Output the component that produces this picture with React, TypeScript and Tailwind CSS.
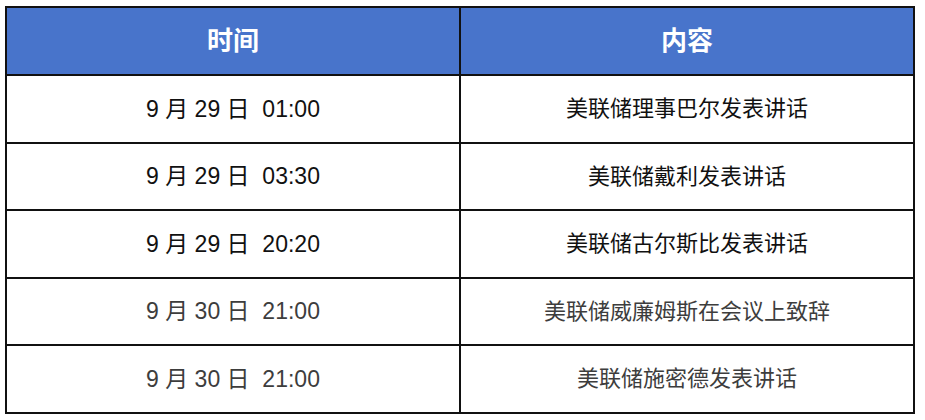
const rows = [
  { time: '9 月 29 日  01:00', content: '美联储理事巴尔发表讲话', dim: false },
  { time: '9 月 29 日  03:30', content: '美联储戴利发表讲话', dim: false },
  { time: '9 月 29 日  20:20', content: '美联储古尔斯比发表讲话', dim: false },
  { time: '9 月 30 日  21:00', content: '美联储威廉姆斯在会议上致辞', dim: true },
  { time: '9 月 30 日  21:00', content: '美联储施密德发表讲话', dim: true }
]

export default function App() {
  return (
    <div
      className="w-[925px] h-[420px] bg-white pl-[5px] pt-[6px]"
      style={{ fontFamily: '"Liberation Sans", "Noto Sans CJK SC", sans-serif' }}
    >
      <table className="w-[910px] border-collapse table-fixed">
        <thead>
          <tr className="bg-[#4874cb] text-white">
            <th className="h-[68px] border-2 border-[#111] text-[26px] font-bold">时间</th>
            <th className="h-[68px] border-2 border-[#111] text-[26px] font-bold">内容</th>
          </tr>
        </thead>
        <tbody>
          {rows.map((r, i) => (
            <tr key={i} className={r.dim ? 'text-[#3d3d3d]' : 'text-[#111]'}>
              <td className="h-[67.5px] border-2 border-[#111] text-center text-[23px] whitespace-pre">{r.time}</td>
              <td className="h-[67.5px] border-2 border-[#111] text-center text-[22px]">{r.content}</td>
            </tr>
          ))}
        </tbody>
      </table>
    </div>
  )
}
